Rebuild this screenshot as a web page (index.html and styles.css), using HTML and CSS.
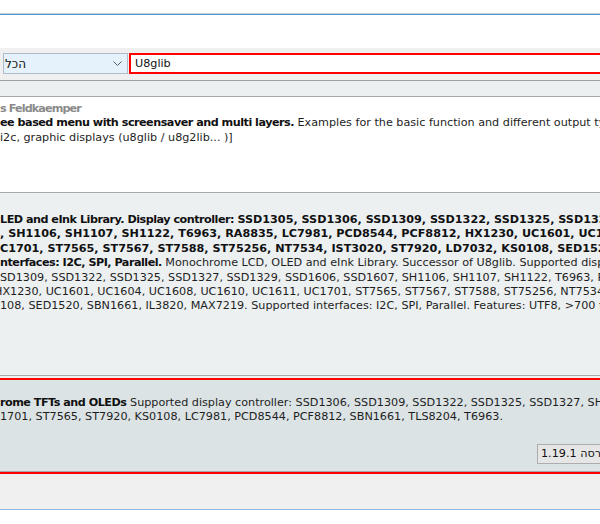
FILE: index.html
```html
<!DOCTYPE html>
<html lang="he">
<head>
  <meta charset="UTF-8">
  <meta name="viewport" content="width=600, initial-scale=1.0">
  <title>Library Manager</title>
  <link rel="stylesheet" href="styles.css">
</head>
<body>
  <div class="titlebar"></div>
  <div class="gap"></div>

  <div class="toolbar">
    <div class="type-select">
      <span class="type-value">הכל</span>
      <!-- dropdown chevron -->
      <svg class="chevron" width="9" height="5" viewBox="0 0 9 5"><path d="M0.5 0.5 L4.5 4.5 L8.5 0.5" fill="none" stroke="#5a5a5a" stroke-width="1"/></svg>
    </div>
    <div class="search"><span>U8glib</span></div>
  </div>

  <div class="list">
    <div class="entry entry-tail"></div>

    <div class="entry entry-light">
      <div class="line by">s Feldkaemper</div>
      <div class="line"><b>ee based menu with screensaver and multi layers.</b> Examples for the basic function and different output types: serial, LCD (i2c, shift register, parallel)</div>
      <div class="line">i2c, graphic displays (u8glib / u8g2lib... )]</div>
    </div>

    <div class="entry entry-dark">
      <div class="line"><b>LED and eInk Library. Display controller: <span class="codes">SSD1305, SSD1306, SSD1309, SSD1322, SSD1325, SSD1327, SSD1329,</span></b></div>
      <div class="line"><b class="codes">, SH1106, SH1107, SH1122, T6963, RA8835, LC7981, PCD8544, PCF8812, HX1230, UC1601, UC1604, UC1608,</b></div>
      <div class="line"><b class="codes">C1701, ST7565, ST7567, ST7588, ST75256, NT7534, IST3020, ST7920, LD7032, KS0108, SED1520, SBN1661,</b></div>
      <div class="line"><b>nterfaces: I2C, SPI, Parallel.</b> Monochrome LCD, OLED and eInk Library. Successor of U8glib. Supported display controller: SSD1305,</div>
      <div class="line">SD1309, SSD1322, SSD1325, SSD1327, SSD1329, SSD1606, SSD1607, SH1106, SH1107, SH1122, T6963, RA8835,</div>
      <div class="line clip-h">HX1230, UC1601, UC1604, UC1608, UC1610, UC1611, UC1701, ST7565, ST7567, ST7588, ST75256, NT7534, IST3020,</div>
      <div class="line">108, SED1520, SBN1661, IL3820, MAX7219. Supported interfaces: I2C, SPI, Parallel. Features: UTF8, &gt;700 fonts,</div>
    </div>

    <div class="selected">
      <div class="selected-frame">
        <div class="entry entry-active">
          <div class="line"><b>rome TFTs and OLEDs</b> Supported display controller: SSD1306, SSD1309, SSD1322, SSD1325, SSD1327, SH1106,</div>
          <div class="line">1701, ST7565, ST7920, KS0108, LC7981, PCD8544, PCF8812, SBN1661, TLS8204, T6963.</div>
          <div class="entry-actions">
            <div class="version" dir="rtl">גרסה 1.19.1</div>
          </div>
        </div>
      </div>
    </div>
  </div>

  <div class="footer"></div>
</body>
</html>
```

FILE: styles.css
```css
body { margin: 0; width: 600px; height: 524px; overflow: hidden; background: #fff; color: #1e1e1e; font-family: "DejaVu Sans", Verdana, sans-serif; font-size: 11.2px; }

/* window chrome */
.titlebar { height: 13px; border-bottom: 1px solid #cdcdcd; }
.gap { height: 33px; border-top: 1px solid #4b9ae0; }

.toolbar {
  display: flex;
  align-items: flex-start;
  gap: 1px;
  height: 33px;
  box-sizing: border-box;
  padding: 5px 0 0 3px;
  background: #f0f0f0;
  border-bottom: 1px solid #a0a0a0;
}
.type-select {
  flex: 0 0 125px;
  height: 21px;
  box-sizing: border-box;
  display: flex;
  align-items: center;
  justify-content: space-between;
  padding: 0 5px 0 1px;
  border: 1px solid #aebccb;
  background: #e5f1fb;
  color: #111;
  font-size: 12px;
}
.chevron { display: block; }
.search {
  flex: 0 0 520px;
  height: 21px;
  box-sizing: border-box;
  display: flex;
  align-items: center;
  padding-left: 4px;
  border: 2px solid #ff0000;
  background: #fff;
  color: #111;
}

/* library list */
.entry {
  overflow: hidden;
  white-space: nowrap;
  box-sizing: border-box;
  border-bottom: 1px solid #a8a8a8;
}
.line { line-height: 14.4px; height: 14.4px; }
.line b { letter-spacing: -0.5px; color: #111; }
.line .codes { letter-spacing: 0; }
.by { color: #8a8a8a; font-weight: bold; letter-spacing: -0.9px; }
.clip-h { margin-left: -6px; }

.entry-tail { height: 16px; background: #ecf0f1; }
.entry-light { height: 96px; padding-top: 5px; background: #fff; }
.entry-dark { height: 183px; padding-top: 20px; background: #ecf0f1; }

.selected { padding-top: 2px; background: #f0f0f0; }
.selected-frame { border-top: 2px solid #ff0000; border-bottom: 2px solid #ff0000; }
.entry-active { height: 92px; padding-top: 16px; background: #dce3e5; }
.entry-actions { display: flex; margin-top: 19px; }
.version {
  margin-left: 537px;
  height: 20px;
  box-sizing: border-box;
  padding: 0 3px;
  line-height: 18px;
  border: 1px solid #adadad;
  background: #e6e6e6;
  color: #111;
}

.footer { height: 35px; background: #f0f0f0; border-bottom: 1px solid #8cb8e2; }
```
